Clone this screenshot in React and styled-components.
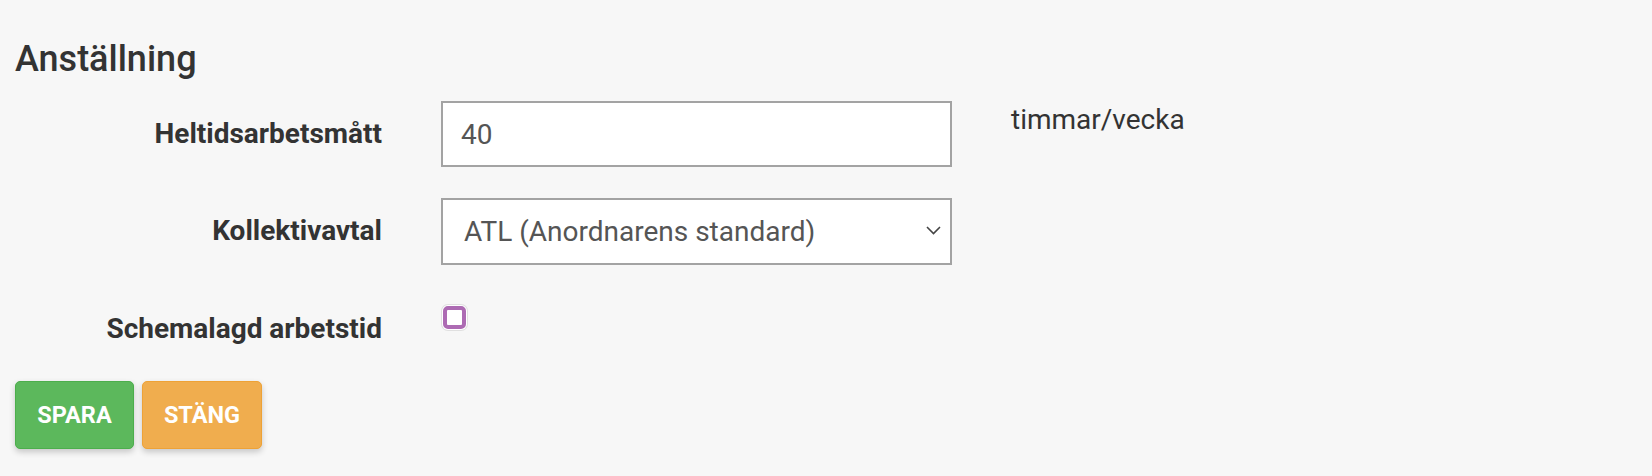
import React from "react";
import styled, { createGlobalStyle } from "styled-components";

const GlobalStyle = createGlobalStyle`
  html, body {
    margin: 0;
    padding: 0;
    background: #f7f7f7;
  }
  body {
    font-family: Roboto, "Liberation Sans", Arial, sans-serif;
    color: #333;
  }
`;

const Page = styled.div`
  padding: 37px 15px 20px 15px;
`;

const Heading = styled.h2`
  margin: 0 0 20px 0;
  font-size: 36px;
  font-weight: 500;
  line-height: 44px;
  color: #333;
`;

const Form = styled.div`
  display: flex;
  flex-direction: column;
  gap: 31px;
`;

const Row = styled.div`
  display: grid;
  grid-template-columns: 367px 511px auto;
  column-gap: 59px;
  align-items: start;
`;

const Label = styled.label`
  text-align: right;
  font-size: 28px;
  font-weight: 700;
  line-height: 66px;
  color: #333;
`;

const TextInput = styled.input`
  box-sizing: border-box;
  width: 100%;
  height: 66px;
  border: 2px solid #a3a3a3;
  background: #fff;
  padding: 0 18px;
  font-family: inherit;
  font-size: 28px;
  color: #555;
  outline: none;
`;

const SelectWrap = styled.div`
  position: relative;
  height: 67px;
`;

const Select = styled.select`
  box-sizing: border-box;
  width: 100%;
  height: 100%;
  appearance: none;
  border: 2px solid #a3a3a3;
  border-radius: 0;
  background: #fff;
  padding: 0 40px 0 21px;
  font-family: inherit;
  font-size: 28px;
  color: #555;
  outline: none;
`;

const Chevron = styled.svg`
  position: absolute;
  right: 11px;
  top: 28px;
  pointer-events: none;
`;

const Unit = styled.div`
  font-size: 28px;
  line-height: 32px;
  padding-top: 3px;
  color: #333;
`;

const Checkbox = styled.input`
  appearance: none;
  box-sizing: border-box;
  width: 23px;
  height: 23px;
  margin: 10px 0 0 2px;
  border: 4px solid #ad6bb3;
  border-radius: 5px;
  background: #fff;
  box-shadow: 0 0 0 1px #fff, 0 0 0 2px #e0e0e0;
`;

const Buttons = styled.div`
  display: flex;
  gap: 8px;
  margin-top: 19px;
`;

const Button = styled.button`
  box-sizing: border-box;
  height: 68px;
  width: ${(p) => p.$width}px;
  border-radius: 5px;
  border: 1.5px solid ${(p) => p.$border};
  background: ${(p) => p.$bg};
  color: #fff;
  font-family: inherit;
  font-size: 23.5px;
  font-weight: 700;
  text-transform: uppercase;
  box-shadow: 0 3px 6px rgba(0, 0, 0, 0.2);
  cursor: pointer;
`;

export default function App() {
  return (
    <>
      <GlobalStyle />
      <Page>
        <Heading>Anställning</Heading>
        <Form>
          <Row>
            <Label>Heltidsarbetsmått</Label>
            <TextInput defaultValue="40" />
            <Unit>timmar/vecka</Unit>
          </Row>
          <Row>
            <Label>Kollektivavtal</Label>
            <SelectWrap>
              <Select defaultValue="atl">
                <option value="atl">ATL (Anordnarens standard)</option>
              </Select>
              <Chevron width="15" height="9" viewBox="0 0 15 9">
                <path d="M1 1l6.5 6.5L14 1" fill="none" stroke="#444" strokeWidth="1.6" />
              </Chevron>
            </SelectWrap>
          </Row>
          <Row>
            <Label>Schemalagd arbetstid</Label>
            <div>
              <Checkbox type="checkbox" />
            </div>
          </Row>
        </Form>
        <Buttons>
          <Button $width={119} $bg="#5cb85c" $border="#4cae4c">Spara</Button>
          <Button $width={120} $bg="#f0ad4e" $border="#eea236">Stäng</Button>
        </Buttons>
      </Page>
    </>
  );
}
